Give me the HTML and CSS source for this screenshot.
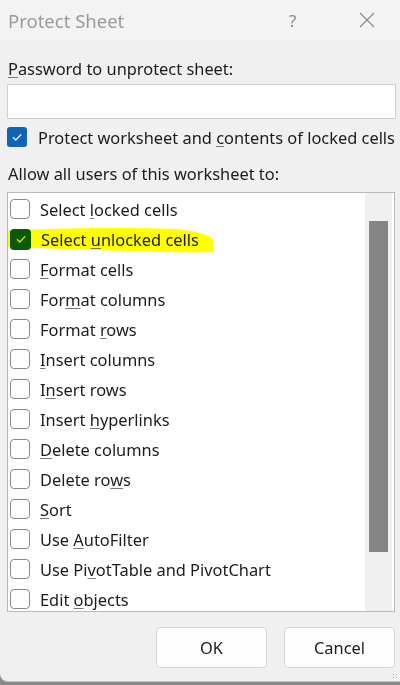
FILE: index.html
```html
<!DOCTYPE html>
<html>
<head>
<meta charset="utf-8">
<link rel="stylesheet" href="styles.css">
</head>
<body>
<div class="dialog">
  <div class="titlebar">
    <span class="title">Protect Sheet</span>
    <span class="help">?</span>
    <span class="close">
      <svg width="16" height="16" viewBox="0 0 16 16"><path d="M1 1 L15 15 M15 1 L1 15" stroke="#8a8a8a" stroke-width="1.2" fill="none"/></svg>
    </span>
  </div>
  <div class="body">
    <div class="label pw"><u>P</u>assword to unprotect sheet:</div>
    <div class="input"></div>
    <div class="protect">
      <span class="cb cb-blue">
        <svg width="20" height="20" viewBox="0 0 20 20"><path d="M6 10.3 L8.8 13 L14.2 7.4" stroke="#fff" stroke-width="1.3" fill="none"/></svg>
      </span>
      <span class="ptext">Protect worksheet and <u>c</u>ontents of locked cells</span>
    </div>
    <div class="label allow">Allow all users of this worksheet to:</div>
    <div class="listbox">
      <div class="items">
        <div class="row"><span class="cb"></span><span>Select <u>l</u>ocked cells</span></div>
        <div class="row"><span class="cb cb-green"><svg width="20" height="20" viewBox="0 0 20 20"><path d="M6 10.3 L8.8 13 L14.2 7.4" stroke="#e8e84a" stroke-width="1.3" fill="none"/></svg></span><span>Select <u>u</u>nlocked cells</span></div>
        <div class="row"><span class="cb"></span><span><u>F</u>ormat cells</span></div>
        <div class="row"><span class="cb"></span><span>For<u>m</u>at columns</span></div>
        <div class="row"><span class="cb"></span><span>Format <u>r</u>ows</span></div>
        <div class="row"><span class="cb"></span><span><u>I</u>nsert columns</span></div>
        <div class="row"><span class="cb"></span><span>I<u>n</u>sert rows</span></div>
        <div class="row"><span class="cb"></span><span>Insert <u>h</u>yperlinks</span></div>
        <div class="row"><span class="cb"></span><span><u>D</u>elete columns</span></div>
        <div class="row"><span class="cb"></span><span>Delete ro<u>w</u>s</span></div>
        <div class="row"><span class="cb"></span><span><u>S</u>ort</span></div>
        <div class="row"><span class="cb"></span><span>Use <u>A</u>utoFilter</span></div>
        <div class="row"><span class="cb"></span><span>Use Pi<u>v</u>otTable and PivotChart</span></div>
        <div class="row"><span class="cb"></span><span>Edit <u>o</u>bjects</span></div>
      </div>
      <div class="scrollbar"><div class="thumb"></div></div>
    </div>
    <div class="buttons">
      <div class="btn">OK</div>
      <div class="btn">Cancel</div>
    </div>
  </div>
  <svg class="highlight" width="210" height="32" viewBox="0 0 210 32">
    <path d="M1 5 C40 2 120 1 170 3 C190 5 200 8 206 13 L207 26 C170 27 120 25 60 23 C30 22 10 21 1 21 Z" fill="#ffff00"/>
  </svg>
  <div class="grip"></div>
</div>
</body>
</html>
```

FILE: styles.css
```css
html, body {
  margin: 0;
  padding: 0;
  background: #8a8a8a;
}
body {
  width: 400px;
  height: 685px;
  overflow: hidden;
  font-family: "Noto Sans", "Open Sans", sans-serif;
  color: #1b1b1b;
}
.dialog {
  position: relative;
  width: 400px;
  height: 682px;
  background: #f0f0f0;
  border-bottom-left-radius: 8px;
  border-bottom: 1px solid #c4c4c4;
  box-sizing: border-box;
  overflow: hidden;
}
.titlebar {
  height: 40px;
  background: #f3f3f3;
  display: flex;
  align-items: center;
}
.title {
  margin-left: 8px;
  font-size: 18.5px;
  color: #9a9a9a;
  flex: 1;
}
.help {
  font-size: 17px;
  color: #8a8a8a;
  width: 20px;
  margin-right: 50px;
}
.close {
  width: 16px;
  margin-right: 25px;
  display: flex;
}
.body {
  padding: 0 4px 0 7px;
}
u {
  text-decoration-color: #777;
  text-underline-offset: 2px;
}
.label {
  font-size: 16.4px;
  line-height: 20px;
  padding-left: 1px;
}
.pw {
  margin-top: 19px;
}
.input {
  margin-top: 5px;
  height: 33px;
  background: #fff;
  border: 1px solid #cfcfcf;
}
.protect {
  display: flex;
  align-items: center;
  margin-top: 8px;
  height: 20px;
  font-size: 16.4px;
}
.cb {
  width: 18px;
  height: 18px;
  border: 1.5px solid #8a8a8a;
  border-radius: 4px;
  background: #fff;
  display: flex;
  align-items: center;
  justify-content: center;
  flex: none;
}
.cb svg { flex: none; }
.cb-blue {
  width: 20px;
  height: 20px;
  border: none;
  background: #0f63b8;
  border-radius: 3px;
}
.cb-green {
  width: 21px;
  height: 21px;
  border: none;
  background: #0c5a12;
}
.ptext {
  margin-left: 11px;
  white-space: nowrap;
}
.allow {
  margin-top: 17px;
}
.listbox {
  margin-top: 8px;
  height: 420px;
  background: #fff;
  border: 1px solid #b9b9c2;
  display: flex;
  width: 388px;
  box-sizing: border-box;
}
.items {
  flex: 1;
  padding-top: 1px;
}
.row {
  height: 30px;
  display: flex;
  align-items: center;
  padding-left: 2px;
  font-size: 16.4px;
  white-space: nowrap;
}
.row .cb { margin-right: 10px; }
.scrollbar {
  width: 27px;
  margin: 0 2px 0 0;
  background: #f0f0f0;
  padding: 28px 4px 0;
  box-sizing: border-box;
}
.thumb {
  height: 331px;
  background: #858585;
}
.buttons {
  display: flex;
  justify-content: flex-end;
  gap: 17px;
  margin-top: 15px;
  padding-right: 1px;
}
.btn {
  width: 109px;
  height: 39px;
  background: #fdfdfd;
  border: 1px solid #d5d5d5;
  border-radius: 4px;
  display: flex;
  align-items: center;
  justify-content: center;
  font-size: 16.4px;
}
.highlight {
  position: absolute;
  left: 7px;
  top: 226px;
  mix-blend-mode: multiply;
}
.grip {
  position: absolute;
  right: 2px;
  bottom: 2px;
  width: 6px;
  height: 6px;
  background: radial-gradient(circle, #aaa 0.8px, transparent 1px) 0 0 / 3px 3px;
}
```
